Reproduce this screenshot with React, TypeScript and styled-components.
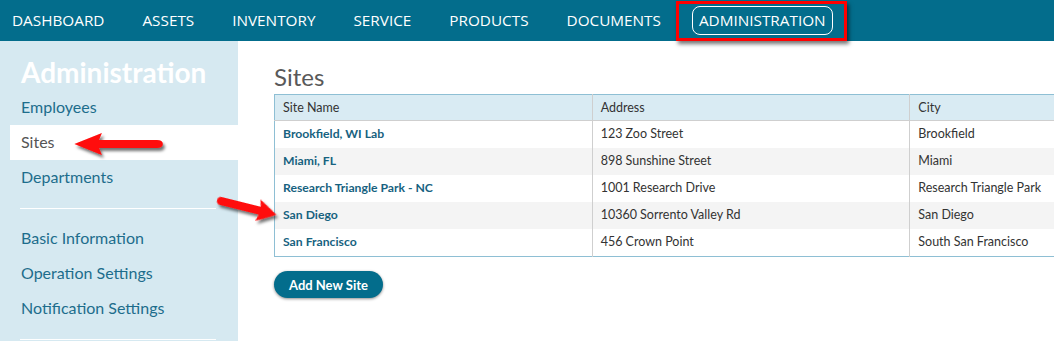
import React from "react";
import styled, { createGlobalStyle } from "styled-components";

const GlobalStyle = createGlobalStyle`
  html, body {
    margin: 0;
    padding: 0;
    background: #ffffff;
  }
  body {
    font-family: Lato, "Noto Sans", sans-serif;
  }
`;

const Page = styled.div`
  position: relative;
  width: 1054px;
  height: 341px;
  overflow: hidden;
  display: flex;
  flex-direction: column;
`;

const TopNav = styled.nav`
  height: 41px;
  flex-shrink: 0;
  background: #036d8c;
  display: flex;
  align-items: center;
  padding-left: 12px;
  padding-bottom: 1px;
  box-sizing: border-box;
  gap: 38px;
`;

const NavItem = styled.a<{ $active?: boolean }>`
  font-family: "Open Sans", sans-serif;
  font-size: 15.3px;
  color: #ffffff;
  text-transform: uppercase;
  text-decoration: none;
  white-space: nowrap;
  ${(p) =>
    p.$active &&
    `
    border: 1px solid #ffffff;
    border-radius: 8px;
    padding: 3px 6px 4px;
    margin-left: -7px;
  `}
`;

const Body = styled.div`
  flex: 1;
  display: flex;
  min-height: 0;
`;

const Sidebar = styled.aside`
  width: 238px;
  flex-shrink: 0;
  background: #d6e9f1;
  padding-top: 14px;
`;

const SideTitle = styled.h2`
  margin: 0 0 0 21px;
  font-size: 28px;
  font-weight: 700;
  color: #ffffff;
  line-height: 35px;
`;

const SideList = styled.ul`
  list-style: none;
  margin: 0;
  padding: 0 0 0 10px;
`;

const SideItem = styled.li<{ $active?: boolean }>`
  height: 35px;
  box-sizing: border-box;
  display: flex;
  align-items: center;
  padding: 0 0 2px 11px;
  font-size: 16px;
  color: ${(p) => (p.$active ? "#555555" : "#1d6d8c")};
  background: ${(p) => (p.$active ? "#ffffff" : "transparent")};
`;

const Divider = styled.hr`
  border: none;
  border-top: 1px solid #ffffff;
  margin: 13px 22px 12px 20px;
`;

const Main = styled.main`
  flex: 1;
  min-width: 0;
  overflow: hidden;
  padding: 22px 0 0 36px;
`;

const Heading = styled.h1`
  margin: 0 0 3px;
  font-size: 24px;
  font-weight: 400;
  color: #595959;
  line-height: 28px;
`;

const Table = styled.table`
  border-collapse: collapse;
  width: 954px;
  table-layout: fixed;
  border: 1px solid #8ebfd4;
  font-size: 12.5px;
  color: #333333;
`;

const HeadCell = styled.th`
  text-align: left;
  font-weight: 400;
  background: #d9ebf3;
  height: 24px;
  padding: 0 8px 1px;
  border-right: 1px solid #cfcfcf;
  border-bottom: 1px solid #cfcfcf;
`;

const Row = styled.tr<{ $shaded?: boolean }>`
  background: ${(p) => (p.$shaded ? "#f4f4f4" : "#ffffff")};
`;

const Cell = styled.td<{ $link?: boolean }>`
  height: 24px;
  padding: 0 8px 3px;
  border-right: 1px solid #cfcfcf;
  font-weight: ${(p) => (p.$link ? 700 : 400)};
  font-size: ${(p) => (p.$link ? "12.2px" : "12.5px")};
  color: ${(p) => (p.$link ? "#17627f" : "#333333")};
  white-space: nowrap;
`;

const AddButton = styled.button`
  margin-top: 14px;
  height: 27px;
  padding: 0 15px;
  border: none;
  border-radius: 14px;
  background: #036d8c;
  color: #ffffff;
  font-family: Lato, sans-serif;
  font-size: 13px;
  font-weight: 700;
  box-shadow: 0 1px 3px rgba(0, 0, 0, 0.45);
`;

const Highlight = styled.div`
  position: absolute;
  left: 676px;
  top: 1px;
  width: 165px;
  height: 34px;
  border: 3px solid #ff0000;
  box-shadow: 2px 3px 4px rgba(0, 0, 0, 0.55);
  pointer-events: none;
`;

const Overlay = styled.svg`
  position: absolute;
  left: 0;
  top: 0;
  pointer-events: none;
`;

const navItems = [
  "Dashboard",
  "Assets",
  "Inventory",
  "Service",
  "Products",
  "Documents",
  "Administration",
];

const sites = [
  ["Brookfield, WI Lab", "123 Zoo Street", "Brookfield"],
  ["Miami, FL", "898 Sunshine Street", "Miami"],
  ["Research Triangle Park - NC", "1001 Research Drive", "Research Triangle Park"],
  ["San Diego", "10360 Sorrento Valley Rd", "San Diego"],
  ["San Francisco", "456 Crown Point", "South San Francisco"],
];

const arrowPath =
  "M0,-4 L40,-4 L38,-11 L57,0 L38,11 L40,4 L0,4 Q-4,4 -4,0 Q-4,-4 0,-4 Z";

export default function App() {
  return (
    <>
      <GlobalStyle />
      <Page>
        <TopNav>
          {navItems.map((item) => (
            <NavItem key={item} $active={item === "Administration"}>
              {item}
            </NavItem>
          ))}
        </TopNav>
        <Body>
          <Sidebar>
            <SideTitle>Administration</SideTitle>
            <SideList>
              <SideItem>Employees</SideItem>
              <SideItem $active>Sites</SideItem>
              <SideItem>Departments</SideItem>
            </SideList>
            <Divider />
            <SideList>
              <SideItem>Basic Information</SideItem>
              <SideItem>Operation Settings</SideItem>
              <SideItem>Notification Settings</SideItem>
            </SideList>
            <Divider />
          </Sidebar>
          <Main>
            <Heading>Sites</Heading>
            <Table>
              <thead>
                <tr>
                  <HeadCell>Site Name</HeadCell>
                  <HeadCell>Address</HeadCell>
                  <HeadCell>City</HeadCell>
                </tr>
              </thead>
              <tbody>
                {sites.map(([name, address, city], i) => (
                  <Row key={name} $shaded={i % 2 === 1}>
                    <Cell $link>{name}</Cell>
                    <Cell>{address}</Cell>
                    <Cell>{city}</Cell>
                  </Row>
                ))}
              </tbody>
            </Table>
            <AddButton>Add New Site</AddButton>
          </Main>
        </Body>
        <Highlight />
        <Overlay width={1054} height={341} viewBox="0 0 1054 341">
          <defs>
            <filter id="arrowShadow" x="-20%" y="-50%" width="140%" height="200%">
              <feDropShadow dx="2" dy="3" stdDeviation="1.5" floodColor="#000" floodOpacity="0.55" />
            </filter>
          </defs>
          <g filter="url(#arrowShadow)">
            <path
              d={arrowPath}
              fill="#ff0a0a"
              transform="translate(157,144) rotate(180) scale(1.45,1)"
            />
            <path d={arrowPath} fill="#ff0a0a" transform="translate(221,201) rotate(14)" />
          </g>
        </Overlay>
      </Page>
    </>
  );
}
